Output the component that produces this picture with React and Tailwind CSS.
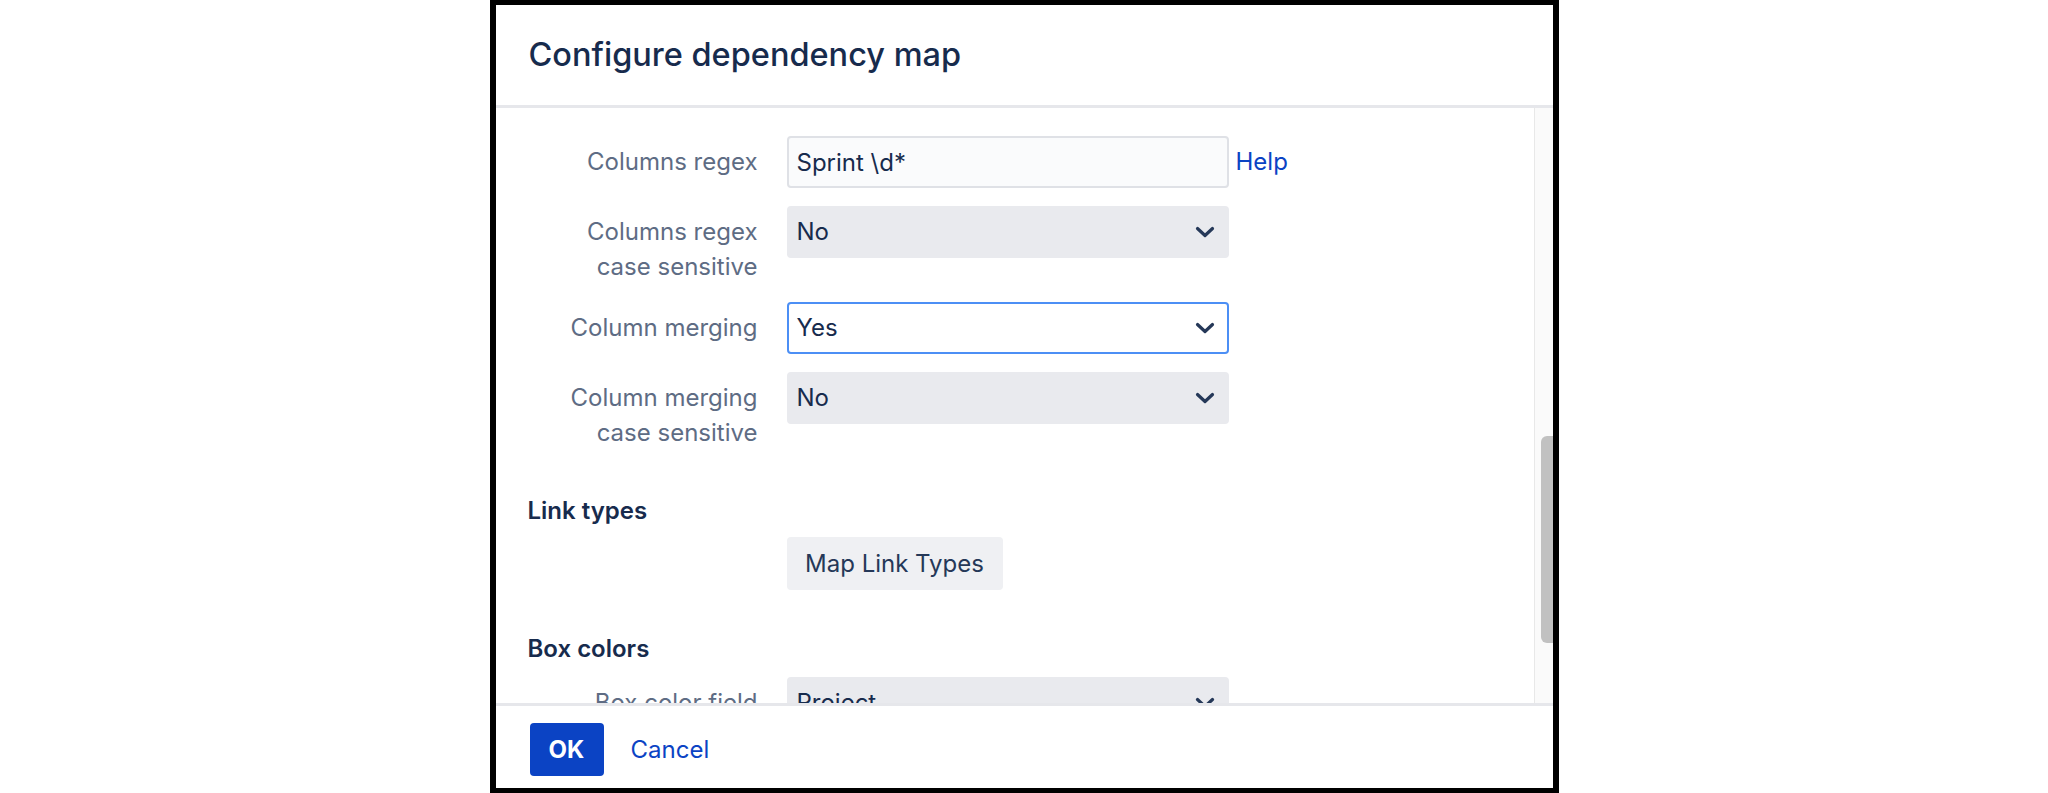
import React from 'react';

const ChevronDown = () => (
  <svg width="20" height="12" viewBox="0 0 20 12" fill="none">
    <path d="M2.5 2.5l7.5 7 7.5-7" stroke="#253858" strokeWidth="3.2" strokeLinecap="round" strokeLinejoin="round" />
  </svg>
);

// label column on the left, control on the right
const FormRow = ({ label, children, extra }) => (
  <div className="flex items-start">
    <div className="w-[230px] shrink-0 pt-2 text-right text-[24px] leading-[35px] text-[#5e6c84]">{label}</div>
    <div className="ml-[29px] w-[442px] shrink-0">{children}</div>
    {extra}
  </div>
);

const SelectBox = ({ value, focused }) => (
  <button
    type="button"
    className={
      focused
        ? 'flex h-[52px] w-full items-center justify-between rounded-[4px] border-2 border-[#4c8ff5] bg-white pl-2 pr-[12px] text-left text-[24px] text-[#172b4d]'
        : 'flex h-[52px] w-full items-center justify-between rounded-[4px] border-2 border-[#e9eaee] bg-[#e9eaee] pl-2 pr-[12px] text-left text-[24px] text-[#172b4d]'
    }
  >
    <span>{value}</span>
    <ChevronDown />
  </button>
);

const SectionHeading = ({ children, className }) => (
  <h3 className={`text-[24px] font-semibold leading-[35px] text-[#172b4d] ${className}`}>{children}</h3>
);

export default function App() {
  return (
    <div className="min-h-screen bg-white font-['Inter',sans-serif]">
      <div className="mx-auto flex h-[793px] w-[1069px] flex-col border-x-[6px] border-y-[5px] border-black bg-white">
        {/* Dialog header */}
        <div className="flex h-[103px] shrink-0 items-center border-b-[3px] border-[#e6e7eb] pl-[33px]">
          <h2 className="text-[32.5px] font-medium text-[#172b4d]">Configure dependency map</h2>
        </div>

        {/* Scrollable settings body */}
        <div className="flex h-[595px] shrink-0">
          <div className="flex-1 overflow-hidden pl-[32px] pt-[28px]">
            <div className="flex flex-col gap-[18px]">
              <FormRow
                label="Columns regex"
                extra={
                  <div className="ml-[7px] flex h-[52px] items-center">
                    <a href="#" className="text-[24px] text-[#0b43c4]">Help</a>
                  </div>
                }
              >
                <input
                  type="text"
                  defaultValue="Sprint \d*"
                  className="h-[52px] w-full rounded-[4px] border-2 border-[#dfe1e6] bg-[#fafbfc] px-2 text-[24px] text-[#172b4d] outline-none"
                />
              </FormRow>
              <FormRow label="Columns regex case sensitive">
                <SelectBox value="No" />
              </FormRow>
              <FormRow label="Column merging">
                <SelectBox value="Yes" focused />
              </FormRow>
              <FormRow label="Column merging case sensitive">
                <SelectBox value="No" />
              </FormRow>
            </div>

            <SectionHeading className="mt-[43px]">Link types</SectionHeading>
            <div className="mt-[9px] pl-[259px]">
              <button
                type="button"
                className="h-[53px] w-[216px] rounded-[4px] bg-[#eff0f3] text-[24px] text-[#253858]"
              >
                Map Link Types
              </button>
            </div>

            <SectionHeading className="mt-[41px]">Box colors</SectionHeading>
            <div className="mt-[11px]">
              <FormRow label="Box color field">
                <SelectBox value="Project" />
              </FormRow>
            </div>
          </div>

          {/* scrollbar */}
          <div className="flex w-[19px] shrink-0 justify-end border-l border-[#e8e8e8] bg-[#fafafa]">
            <div className="mt-[328px] h-[207px] w-[12px] rounded-l-[6px] bg-[#c1c1c1]" />
          </div>
        </div>

        {/* Dialog footer */}
        <div className="flex flex-1 items-start gap-[27px] border-t-[3px] border-[#e6e7eb] pl-[34px] pt-[17px]">
          <button type="button" className="h-[53px] w-[74px] rounded-[4px] bg-[#0b43c4] text-[24px] font-bold text-white">
            OK
          </button>
          <button type="button" className="h-[53px] text-[24px] text-[#0b43c4]">
            Cancel
          </button>
        </div>
      </div>
    </div>
  );
}
